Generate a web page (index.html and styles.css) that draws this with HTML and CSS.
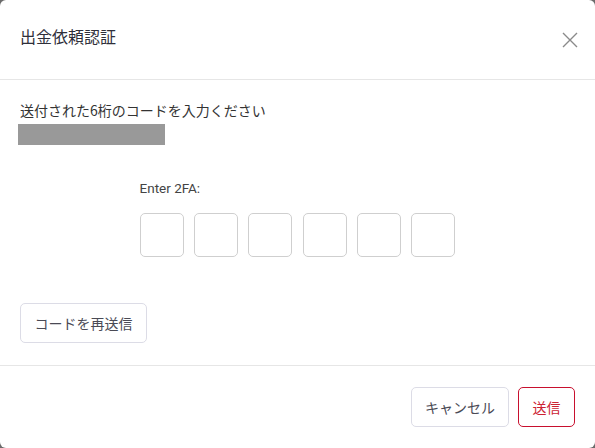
FILE: index.html
```html
<!DOCTYPE html>
<html lang="ja">
<head>
  <meta charset="UTF-8">
  <meta name="viewport" content="width=device-width, initial-scale=1">
  <title>出金依頼認証</title>
  <link rel="stylesheet" href="styles.css">
</head>
<body>
  <div class="modal">
    <div class="modal-header">
      <h2 class="modal-title">出金依頼認証</h2>
      <button class="close" aria-label="close">
        <svg width="16" height="16" viewBox="0 0 16 16">
          <path d="M1 1 L15 15 M15 1 L1 15" stroke="#8a8a8a" stroke-width="1.4" fill="none"/>
        </svg>
      </button>
    </div>

    <div class="modal-body">
      <p class="info">送付された6桁のコードを入力ください</p>
      <div class="masked"></div>

      <div class="twofa">
        <label class="twofa-label">Enter 2FA:</label>
        <div class="code-inputs">
          <input type="text" maxlength="1">
          <input type="text" maxlength="1">
          <input type="text" maxlength="1">
          <input type="text" maxlength="1">
          <input type="text" maxlength="1">
          <input type="text" maxlength="1">
        </div>
      </div>

      <button class="btn resend">コードを再送信</button>
    </div>

    <div class="modal-footer">
      <button class="btn cancel">キャンセル</button>
      <button class="btn submit">送信</button>
    </div>
  </div>
</body>
</html>
```

FILE: styles.css
```css
body {
  margin: 0;
  background: #6b6b6b;
  font-family: 'Noto Sans CJK JP', sans-serif;
  color: #333;
}

.modal {
  background: #fff;
  height: 448px;
  border-radius: 6px;
  overflow: hidden;
  display: flex;
  flex-direction: column;
}

.modal-header {
  display: flex;
  justify-content: space-between;
  align-items: flex-start;
  height: 80px;
  box-sizing: border-box;
  padding: 24px 17px 0 20px;
  border-bottom: 1px solid #e6e6e6;
}

.modal-title {
  margin: 0;
  font-size: 16px;
  font-weight: normal;
  line-height: 24px;
  color: #2f2f3a;
}

.close {
  background: none;
  border: none;
  padding: 0;
  margin-top: 8px;
  width: 16px;
  height: 16px;
  cursor: pointer;
}

.close svg {
  display: block;
}

.modal-body {
  padding: 20px 20px 22px;
  border-bottom: 1px solid #e6e6e6;
}

.info {
  margin: 0;
  font-size: 14px;
  line-height: 20px;
  color: #333;
}

.masked {
  width: 147px;
  height: 21px;
  margin: 4px 0 0 -2px;
  background: #999;
}

.twofa {
  width: 316px;
  margin: 33px auto 0;
}

.twofa-label {
  display: block;
  font-family: 'Roboto', 'Noto Sans CJK JP', sans-serif;
  font-size: 13.5px;
  line-height: 20px;
  color: #444;
}

.code-inputs {
  display: flex;
  gap: 10.4px;
  margin-top: 15px;
}

.code-inputs input {
  width: 44px;
  height: 44px;
  box-sizing: border-box;
  border: 1px solid #cfcfcf;
  border-radius: 5px;
  padding: 0;
  text-align: center;
  font-size: 18px;
}

.btn {
  font-family: 'Noto Sans CJK JP', sans-serif;
  font-size: 14px;
  height: 40px;
  padding: 0 13px;
  background: #fff;
  border: 1px solid #dcdce6;
  border-radius: 5px;
  color: #4a4a55;
  cursor: pointer;
}

.resend {
  margin-top: 46px;
  width: 127px;
}

.modal-footer {
  display: flex;
  justify-content: flex-end;
  gap: 9px;
  padding: 21px 20px 0;
}

.cancel {
  width: 98px;
}

.submit {
  width: 57px;
  border-color: #c8102e;
  color: #cc2233;
}
```
